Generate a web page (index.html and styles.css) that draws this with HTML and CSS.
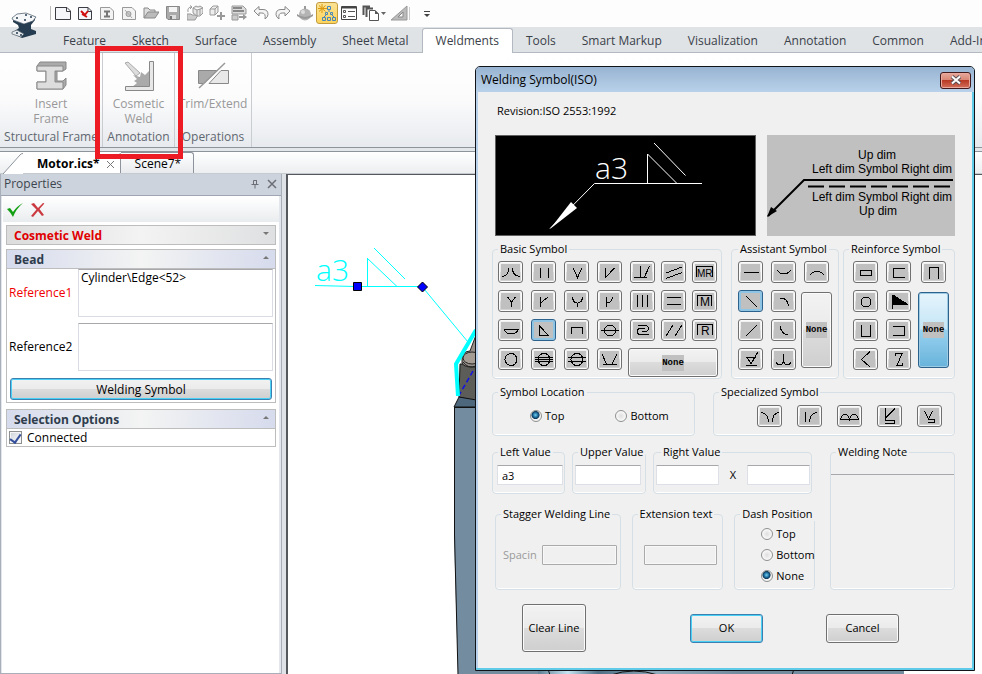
FILE: index.html
```html
<!DOCTYPE html>
<html lang="en">
<head>
<meta charset="utf-8">
<title>Motor.ics - Welding Symbol</title>
<link rel="stylesheet" href="styles.css">
</head>
<body>
<header class="ribbon">
  <div class="quick">
    <svg class="logo" viewBox="0 0 26 27" aria-hidden="true"><path d="M2 8L13 12L24 6V8L20 13V17L25 19V22L11 26L1 21L8 16L7 13L2 10Z" fill="#263c50"/><path d="M1 6L6 2L15 1L25 5L22 9L13 12L2 8Z" fill="#f5f7f8" stroke="#3f5060" stroke-width=".7"/><path d="M1 20L6 18L13 22L10 25L1 22Z" fill="#e7eaec" stroke="#53616d" stroke-width=".7"/><path d="M5 6h2M14 3h2M19 5h2M13 8h2M5 21h2M9 23h2" stroke="#263c50" stroke-width="1.4"/></svg>
    <div class="quick-bar">
      <button aria-label="New"><svg viewBox="0 0 16 16"><path d="M.5 2.500H12L15.500 6V14.500H.5Z" fill="#f4f6fa" stroke="#3c3c44"/><path d="M11.500 2.500V6.500H15.500" fill="none" stroke="#3c3c44"/></svg></button>
      <button aria-label="New scene"><svg viewBox="0 0 16 16"><path d="M1.500 2.500H11L14.500 6V14.500H1.500Z" fill="#f4f6fa" stroke="#3c3c44"/><path d="M11 2.500V6.500H14" fill="none" stroke="#3c3c44"/><path d="M4 6L8 10M11 6L7 11M5 9L10 12" stroke="#d01010" stroke-width="2"/></svg></button>
      <button aria-label="New part"><svg viewBox="0 0 16 16"><path d="M1.500 2.500H11L14.500 6V14.500H1.500Z" fill="#f3f3f3" stroke="#999"/><path d="M5 6.500H11M5 11.500H11M8 6V12" stroke="#777" stroke-width="2"/></svg></button>
      <button aria-label="New drawing"><svg viewBox="0 0 16 16"><path d="M1.500 2.500H11L14.500 6V14.500H1.500Z" fill="#f3f3f3" stroke="#999"/><circle cx="7.500" cy="9" r="2.500" fill="#ccc" stroke="#999"/><path d="M4 5L11 13" stroke="#aaa"/></svg></button>
      <button aria-label="Open"><svg viewBox="0 0 16 16"><path d="M1 13V3H5L7 5H12V7" fill="#ddd" stroke="#888"/><path d="M1 13L5 7H16L12 13Z" fill="#bbb" stroke="#888"/></svg></button>
      <button aria-label="Save"><svg viewBox="0 0 16 16"><path d="M1.500 1.500H14.500V14.500H3L1.500 13Z" fill="#aaa" stroke="#888"/><path d="M4 2H12V7H4Z" fill="#f4f4f4"/><path d="M5 10H11V14H5Z" fill="#ddd"/><path d="M6 11V14" stroke="#777" stroke-width="2"/></svg></button>
      <button aria-label="Import"><svg viewBox="0 0 16 16"><path d="M0 15V9H4L5 10H11L8 15Z" fill="#ccc" stroke="#999"/><path d="M6 3L9 1L11 2L13 1L16 3V8L13 11H10L6 8ZM6 3L10 5L16 3M10 5V11M13 4V10" fill="#e5e5e5" stroke="#999"/><path d="M1 7Q0 2 5 2M3 .5L5 2L3 4" fill="none" stroke="#999"/></svg></button>
      <button aria-label="Insert"><svg viewBox="0 0 16 16"><path d="M1 4L4 1H9V7L6 10H1ZM1 4H6V10M6 4L9 1" fill="#eee" stroke="#999"/><path d="M12 7V15M8 11H16" stroke="#999" stroke-width="2"/></svg></button>
      <button aria-label="Export"><svg viewBox="0 0 16 16"><path d="M1 1H12L15 4V9H1Z" fill="#ddd" stroke="#999"/><path d="M2 3H11M2 6H13" stroke="#888" stroke-width="2"/><path d="M1 10H7V15H1Z" fill="#ccc" stroke="#999"/><path d="M8 11H12V9L16 12L12 15V13H8Z" fill="#999"/></svg></button>
      <button aria-label="Undo"><svg viewBox="0 0 16 16"><path d="M1 6L6 1.500V4.500H10Q15 4.500 15 9.500Q15 12 12 14Q13 8 9 8H6V11Z" fill="#f5f5f5" stroke="#888"/></svg></button>
      <button aria-label="Redo"><svg viewBox="0 0 16 16"><path d="M15 6L10 1.500V4.500H6Q1 4.500 1 9.500Q1 12 4 14Q3 8 7 8H10V11Z" fill="#f5f5f5" stroke="#888"/></svg></button>
      <button aria-label="Render"><svg viewBox="0 0 16 16"><circle cx="8" cy="9.500" r="6" fill="#b4b4b4"/><path d="M8 1V4" stroke="#999" stroke-width="2"/><path d="M0 9Q8 15 16 9V11Q8 17 0 11Z" fill="#999"/><circle cx="6" cy="7" r="2" fill="#ddd"/></svg></button>
      <button class="active" aria-label="Scene tree"><svg viewBox="0 0 18 18"><path d="M4 0V9M0 4.500H9M1 1.500L7.500 7.500M7.500 1.500L1 7.500" stroke="#d99a10"/><path d="M9.500 2.500h3v3h-3zM7.500 8.500h2v2h-2zM12.500 8.500h2v2h-2zM4.500 13.500h3v3h-3zM9.500 13.500h3v3h-3zM14.500 13.500h3v3h-3zM11 6V8M6 13L8 11M14 11L16 13" fill="none" stroke="#4587bd"/></svg></button>
      <button aria-label="Property list"><svg viewBox="0 0 16 16"><path d="M.5 1.500H15.500V14.500H.5Z" fill="#fff" stroke="#444"/><path d="M1 2.500H15" stroke="#444" stroke-width="2"/><path d="M2.500 5.500h2v2h-2zM2.500 10.500h2v2h-2zM7 6.500H14M7 11.500H14" fill="none" stroke="#555"/></svg></button>
      <button class="wide" aria-label="Copies"><svg viewBox="0 0 24 16"><path d="M1.500 10V1.500H8M4.500 12V3.500H11" fill="none" stroke="#555" stroke-width="2"/><path d="M7.500 5.500H13L16.500 9V15.500H7.500Z" fill="#fff" stroke="#555"/><path d="M13 5V9H17" fill="#555"/><path d="M19 7H24L21.500 10Z" fill="#666"/></svg></button>
      <button class="wide" aria-label="Measure"><svg viewBox="0 0 24 16"><path d="M1 15L17 1V15Z" fill="#bbb" stroke="#999"/><path d="M8 12L13 7V12Z" fill="#f8f8f8" stroke="#888"/><path d="M19.500 2V15" stroke="#ccc"/></svg></button>
      <button aria-label="Customize"><svg viewBox="0 0 16 16"><path d="M5 6.500H11" stroke="#444"/><path d="M5 9H11L8 12Z" fill="#444"/></svg></button>
    </div>
  </div>
  <nav class="tabs">
    <a href="#">Feature</a><a href="#">Sketch</a><a href="#">Surface</a><a href="#">Assembly</a><a href="#">Sheet Metal</a><a href="#" class="current">Weldments</a><a href="#">Tools</a><a href="#">Smart Markup</a><a href="#">Visualization</a><a href="#">Annotation</a><a href="#">Common</a><a href="#">Add-Ins</a>
  </nav>
  <div class="groups">
    <section class="group frame">
      <button class="tool"><svg viewBox="0 0 32 32"><path d="M2 6L5 2H31V9L28 11H22V21H28L31 18V25L28 29H2V22H11V11H2Z" fill="#aaa" stroke="#888"/><path d="M2 6H28V11H20V22H28V29H2V22H11V11H2Z" fill="#ddd" stroke="#888"/></svg><span>Insert</span><span>Frame</span></button>
      <h2>Structural Frame</h2>
    </section>
    <section class="group weld">
      <button class="tool"><svg viewBox="0 0 32 32"><path d="M2 3L5 2L17 13L13 16Z" fill="#ddd" stroke="#aaa"/><path d="M26 11L22 15L18 12L17 17L10 15L14 19L11 21L14 23L9 27H26Z" fill="#aaa"/><path d="M2.500 26.500H26.500V1.500H30.500V30.500H2.500Z" fill="#e8e8e8" stroke="#888"/></svg><span>Cosmetic</span><span>Weld</span></button>
      <h2>Annotation</h2>
      <div class="callout"></div>
    </section>
    <section class="group ops">
      <button class="tool"><svg viewBox="0 0 32 32"><path d="M1.500 10.500H20L7 23.500H1.500Z" fill="#aaa" stroke="#888"/><path d="M24 10.500H31.500V23.500H12Z" fill="#e8e8e8" stroke="#888"/><path d="M2 28L28 3" stroke="#999" stroke-width="1.500"/></svg><span>Trim/Extend</span></button>
      <h2>Operations</h2>
    </section>
  </div>
</header>
<div class="documents">
  <a href="#" class="doc open"><svg viewBox="0 0 20 21" aria-hidden="true"><path d="M0 21L17 2Q18 .5 20 .5V21Z" fill="#fff"/><path d="M0 21L17 2Q18 .5 20 .5" fill="none" stroke="#8d939b"/></svg><b>Motor.ics*</b><svg class="x" viewBox="0 0 9 9" aria-hidden="true"><path d="M1 1L8 8M8 1L1 8" stroke="#777"/></svg></a>
  <a href="#" class="doc">Scene7*</a>
</div>
<main class="work">
  <aside class="panel">
    <div class="panel-title"><span>Properties</span><button aria-label="Pin"><svg viewBox="0 0 10 10"><path d="M3.500 5V1.500H6.500V5M1.500 5.500H8.500M5 6V9.500M6.500 1V5" fill="none" stroke="#6b6f75"/></svg></button><button aria-label="Close panel"><svg viewBox="0 0 10 10"><path d="M1 1L9 9M9 1L1 9" stroke="#6b6f75" stroke-width="1.500"/></svg></button></div>
    <div class="panel-body">
      <div class="confirm"><button aria-label="Accept"><svg viewBox="0 0 16 16"><path d="M0 7L3 6L6 10Q10 4 16 1Q9 7 6 15Q4 11 0 7Z" fill="#12a012"/></svg></button><button aria-label="Reject"><svg viewBox="0 0 16 16"><path d="M1 2L4 1L8 6L13 1Q15 1 14 2L9.500 7L14 13L12 14L8 9L3 15L1 14L6.500 7.500Z" fill="#cb3a40"/></svg></button></div>
      <button class="bar feature"><b>Cosmetic Weld</b><i class="down"></i></button>
      <section class="box">
        <button class="bar"><b>Bead</b><i class="up"></i></button>
        <div class="refs">
          <label for="ref1" class="missing">Reference1</label><textarea id="ref1">Cylinder\Edge&lt;52&gt;</textarea>
          <label for="ref2">Reference2</label><textarea id="ref2"></textarea>
        </div>
        <button class="push focus full">Welding Symbol</button>
      </section>
      <section class="box">
        <button class="bar"><b>Selection Options</b><i class="up"></i></button>
        <label class="check"><input type="checkbox" checked>Connected</label>
      </section>
    </div>
  </aside>
  <div class="canvas">
    <svg class="scene" viewBox="0 0 694 500" role="img" aria-label="Model view">
      <defs><linearGradient id="shine"><stop offset="0" stop-color="#5f7f95"/><stop offset=".15" stop-color="#c4e4f2"/><stop offset=".3" stop-color="#4f6f85"/><stop offset=".6" stop-color="#8fa9ba"/><stop offset="1" stop-color="#738c9f"/></linearGradient></defs>
      <path d="M171 222L188 226V189L172 189Z" fill="#5c5d58" stroke="#111"/>
      <path d="M174 188Q173 176 182 176L188 160V192Q176 193 174 188Z" fill="#97908a" stroke="#222"/>
      <ellipse cx="184" cy="183" rx="9" ry="6" fill="#a59c93" stroke="#222"/>
      <path d="M175 187Q180 194 188 191" fill="none" stroke="#222"/>
      <path d="M171 222L200 227V232H166Z" fill="#4d687d" stroke="#111"/>
      <path d="M166 232H616V500H170L166 360Z" fill="#738c9f"/>
      <path d="M250 494H450V500H250Z" fill="url(#shine)"/>
      <path d="M260 494L262 500M323 500Q345 492 370 500M506 494L504 500" fill="none" stroke="#111"/>
      <path d="M166.500 232V360L170 500M166 232.500H190" fill="none" stroke="#111"/>
      <path d="M185 196L170 222" stroke="#1010e8" stroke-width="1.500" stroke-dasharray="5 3"/>
      <path d="M188 155L168 189L170 221" fill="none" stroke="#0ff" stroke-width="4"/>
      <g fill="none" stroke="#0ff"><path d="M27 110.500L67 111.500H134L180 167M79.500 83V111M79 83L109 111.500M86 73L117 104"/></g>
      <text x="28" y="106" class="cad cyan">a3</text>
      <path d="M65.500 107.500H73.500V115.500H65.500Z" fill="#00f" stroke="#000"/>
      <path d="M134.500 107L139.500 112L134.500 117L129.500 112Z" fill="#00f" stroke="#000"/>
    </svg>
  </div>
</main>

<form class="dialog" role="dialog" aria-labelledby="dlg-title">
  <div class="dialog-title"><h1 id="dlg-title">Welding Symbol(ISO)</h1><button type="button" class="close" aria-label="Close"><svg viewBox="0 0 12 10"><path d="M2 1.500L10 8.500M10 1.500L2 8.500" stroke="#5c5055" stroke-width="4"/><path d="M2 1.500L10 8.500M10 1.500L2 8.500" stroke="#fff" stroke-width="2"/></svg></button></div>
  <div class="dialog-body">
    <p class="revision">Revision:ISO 2553:1992</p>
    <div class="previews">
      <svg class="preview" viewBox="0 0 261 101" role="img" aria-label="Symbol preview"><path d="M207 48.500H99.500L55 93.500M152.500 48V19L181.500 48M159 8L190.500 40.500" fill="none" stroke="#fff"/><path d="M55 94L76 67L82 73Z" fill="#fff"/><text x="100" y="44" class="cad white">a3</text></svg>
      <svg class="guide" viewBox="0 0 188 101" role="img" aria-label="Dimension positions"><path d="M186 45H37L1 81" fill="none" stroke="#000" stroke-width="2"/><path d="M0 82L4 72L10 76Z"/><path d="M41 51.500H183" stroke="#000" stroke-width="2" stroke-dasharray="16 5"/><g font-family="Liberation Sans, sans-serif" font-size="12"><text x="91" y="24">Up dim</text><text x="45" y="38">Left dim Symbol Right dim</text><text x="45" y="66">Left dim Symbol Right dim</text><text x="92" y="80">Up dim</text></g></svg>
    </div>
    <div class="row symbols">
      <fieldset class="basic"><legend>Basic Symbol</legend>
        <div class="pad">
          <button type="button" aria-label="Flanged edge"><svg viewBox="3 3 19 16"><path d="M4 15.500Q10.500 15 10.500 7M14.500 7Q14.500 15 22 15.500"/></svg></button>
          <button type="button" aria-label="Square"><svg viewBox="3 3 19 16"><path d="M9.500 7V17M17.500 7V17"/></svg></button>
          <button type="button" aria-label="V"><svg viewBox="3 3 19 16"><path d="M9 7L13.500 16.500L18 7"/></svg></button>
          <button type="button" aria-label="Bevel"><svg viewBox="3 3 19 16"><path d="M8.500 7V16.500L17.500 7"/></svg></button>
          <button type="button" aria-label="Steep bevel"><svg viewBox="3 3 19 16"><path d="M10.500 5V16.500M4 16.500H17M19.500 5L14 17"/></svg></button>
          <button type="button" aria-label="Inclined"><svg viewBox="3 3 19 16"><path d="M5 12L21 6M5 17.500L21 11.500"/></svg></button>
          <button type="button" aria-label="MR"><svg viewBox="3 3 19 16"><path d="M4.500 16V5.500H20.500V16"/><text x="5" y="16">MR</text></svg></button>
          <button type="button" aria-label="Y"><svg viewBox="3 3 19 16"><path d="M9.500 7L13.500 12L17.500 7M13.500 12V17"/></svg></button>
          <button type="button" aria-label="Half Y"><svg viewBox="3 3 19 16"><path d="M9.500 7V17M9.500 13L17 7"/></svg></button>
          <button type="button" aria-label="U"><svg viewBox="3 3 19 16"><path d="M8.500 7Q9 13 13.500 13Q18 13 18.500 7M13.500 13V17"/></svg></button>
          <button type="button" aria-label="J"><svg viewBox="3 3 19 16"><path d="M9.500 7V17M9.500 13Q15 13 15.500 7"/></svg></button>
          <button type="button" aria-label="Three bars"><svg viewBox="3 3 19 16"><path d="M7.500 5V17M12.500 5V17M17.500 5V17"/></svg></button>
          <button type="button" aria-label="Surface joint"><svg viewBox="3 3 19 16"><path d="M6 7.500H20M6 14.500H20"/></svg></button>
          <button type="button" aria-label="M"><svg viewBox="3 3 19 16"><path d="M5.500 16V5.500H19.500V16"/><text x="8" y="16" class="one">M</text></svg></button>
          <button type="button" aria-label="Backing run"><svg viewBox="3 3 19 16"><path d="M6 10.500H20.500Q18 14.500 15.500 14.500H11Q8 14.500 6 10.500"/></svg></button>
          <button type="button" class="on" aria-label="Fillet"><svg viewBox="3 3 19 16"><path d="M8.500 7V16.500H17.500Z"/></svg></button>
          <button type="button" aria-label="Plug"><svg viewBox="3 3 19 16"><path d="M7.500 15V8.500H18.500V15"/></svg></button>
          <button type="button" aria-label="Spot seam"><svg viewBox="3 3 19 16"><circle cx="13" cy="11.500" r="5.500"/><path d="M4 11.500H22"/></svg></button>
          <button type="button" aria-label="Fold"><svg viewBox="3 3 19 16"><path d="M7.500 6.500H15Q18.500 6.500 18.500 9.500Q18.500 12.500 15 12.500H12M15 9.500H10Q7.500 9.500 7.500 12.500Q7.500 15.500 10 15.500H18.500"/></svg></button>
          <button type="button" aria-label="Inclined joint"><svg viewBox="3 3 19 16"><path d="M5 17L12 6M14 17L21 6"/></svg></button>
          <button type="button" aria-label="R"><svg viewBox="3 3 19 16"><path d="M5.500 16V5.500H20.500V16"/><text x="9" y="16" class="one">R</text></svg></button>
          <button type="button" aria-label="Spot"><svg viewBox="3 3 19 16"><circle cx="13" cy="11.500" r="6"/></svg></button>
          <button type="button" aria-label="Seam three"><svg viewBox="3 3 19 16"><circle cx="13" cy="11.500" r="6"/><path d="M4 9.500H22M4 11.500H22M4 13.500H22"/></svg></button>
          <button type="button" aria-label="Seam two"><svg viewBox="3 3 19 16"><circle cx="13" cy="11.500" r="6"/><path d="M4 9.500H22M4 13.500H22"/></svg></button>
          <button type="button" aria-label="Steep V"><svg viewBox="3 3 19 16"><path d="M5 6L9.500 16L6 16.500H20L15 16L20 6"/></svg></button>
          <button type="button" class="none across"><span>None</span></button>
        </div>
      </fieldset>
      <fieldset class="assistant"><legend>Assistant Symbol</legend>
        <div class="pad">
          <button type="button" aria-label="Flat"><svg viewBox="3 3 19 16"><path d="M6 11.500H21"/></svg></button>
          <button type="button" aria-label="Concave"><svg viewBox="3 3 19 16"><path d="M6 9.500Q13 16.500 20 9.500"/></svg></button>
          <button type="button" aria-label="Convex"><svg viewBox="3 3 19 16"><path d="M6 13.500Q13 7 20 13.500"/></svg></button>
          <button type="button" class="on" aria-label="Flat slant"><svg viewBox="3 3 19 16"><path d="M8 6L19 17"/></svg></button>
          <button type="button" aria-label="Convex slant"><svg viewBox="3 3 19 16"><path d="M9 8Q17 8 17.500 16"/></svg></button>
          <button type="button" class="none down"><span>None</span></button>
          <button type="button" aria-label="Rising slant"><svg viewBox="3 3 19 16"><path d="M8 17L19 6"/></svg></button>
          <button type="button" aria-label="Concave slant"><svg viewBox="3 3 19 16"><path d="M9.500 7Q9.500 14.500 17 16"/></svg></button>
          <button type="button" aria-label="Finish"><svg viewBox="3 3 19 16"><path d="M8 9.500H17L13 15.500L9 9.500M13 15.500L20 4M8 17.500H19"/></svg></button>
          <button type="button" aria-label="Blended toes"><svg viewBox="3 3 19 16"><path d="M12.500 6V14Q9 19.500 5 14.500M12.500 14Q16 19.500 20 14.500"/></svg></button>
        </div>
      </fieldset>
      <fieldset class="reinforce"><legend>Reinforce Symbol</legend>
        <div class="pad">
          <button type="button" aria-label="Rectangle"><svg viewBox="3 3 19 16"><path d="M7.500 9.500H18.500V14.500H7.500Z"/></svg></button>
          <button type="button" aria-label="Open right"><svg viewBox="3 3 19 16"><path d="M19 7.500H7.500V16.500H19"/></svg></button>
          <button type="button" aria-label="Open bottom"><svg viewBox="3 3 19 16"><path d="M8.500 17.500V6.500H17.500V17.500"/></svg></button>
          <button type="button" aria-label="All round"><svg viewBox="3 3 19 16"><circle cx="13" cy="12" r="5"/></svg></button>
          <button type="button" aria-label="Field weld"><svg viewBox="3 3 19 16"><path d="M6.500 5V19"/><path d="M7 5L21 14H7Z" fill="#000"/></svg></button>
          <button type="button" class="none down chosen"><span>None</span></button>
          <button type="button" aria-label="Open top"><svg viewBox="3 3 19 16"><path d="M8.500 6V17.500H17.500V6"/></svg></button>
          <button type="button" aria-label="Open left"><svg viewBox="3 3 19 16"><path d="M7 7.500H18.500V16.500H7"/></svg></button>
          <button type="button" aria-label="Tail"><svg viewBox="3 3 19 16"><path d="M17 3.500L8.500 11.500L17 19"/></svg></button>
          <button type="button" aria-label="Staggered"><svg viewBox="3 3 19 16"><path d="M9.500 8V5.500H16L11 17.500H16V15"/></svg></button>
        </div>
      </fieldset>
    </div>
    <div class="row second">
      <fieldset class="location"><legend>Symbol Location</legend>
        <div class="options"><label><input type="radio" name="loc" checked>Top</label><label><input type="radio" name="loc">Bottom</label></div>
      </fieldset>
      <fieldset class="special"><legend>Specialized Symbol</legend>
        <div class="pad">
          <button type="button" aria-label="Flare V"><svg viewBox="3 3 19 16"><path d="M4 7.500Q11 8 11.500 17M22 7.500Q15.500 8 15.500 17"/></svg></button>
          <button type="button" aria-label="Flare bevel"><svg viewBox="3 3 19 16"><path d="M8.500 7V17M20 7.500Q13 8 12.500 17"/></svg></button>
          <button type="button" aria-label="Surfacing"><svg viewBox="3 3 19 16"><path d="M3 14.500H22M3.500 14Q5 9.500 8 9.500Q11 9.500 12.500 14Q14 9.500 17 9.500Q20 9.500 21.500 14"/></svg></button>
          <button type="button" aria-label="Bevel with backing"><svg viewBox="3 3 19 16"><path d="M8.500 3V15.500H17.500V18.500H8M18 3.500L9 12.500"/></svg></button>
          <button type="button" aria-label="V with backing"><svg viewBox="3 3 19 16"><path d="M7.500 6L11.500 14L15.500 6M11.500 14.500H17.500V17.500H11"/></svg></button>
        </div>
      </fieldset>
    </div>
    <div class="row lower">
      <div class="values">
        <div class="row">
          <fieldset class="v1"><legend>Left Value</legend><input type="text" value="a3" aria-label="Left Value"></fieldset>
          <fieldset class="v2"><legend>Upper Value</legend><input type="text" aria-label="Upper Value"></fieldset>
          <fieldset class="v3"><legend>Right Value</legend><div class="pair"><input type="text" aria-label="Right Value"><span>X</span><input type="text" aria-label="Right Value length"></div></fieldset>
        </div>
        <div class="row third">
          <fieldset class="stagger"><legend>Stagger Welding Line</legend><div class="off"><label for="spacing">Spacing</label><input id="spacing" type="text" disabled></div></fieldset>
          <fieldset class="ext"><legend>Extension text</legend><div class="off"><input type="text" disabled aria-label="Extension text"></div></fieldset>
          <fieldset class="dash"><legend>Dash Position</legend><div class="options column"><label><input type="radio" name="dash">Top</label><label><input type="radio" name="dash">Bottom</label><label><input type="radio" name="dash" checked>None</label></div></fieldset>
        </div>
      </div>
      <fieldset class="note"><legend>Welding Note</legend><textarea aria-label="Welding Note"></textarea></fieldset>
    </div>
    <div class="actions">
      <button type="button" class="push tall">Clear Line</button>
      <button type="button" class="push focus">OK</button>
      <button type="button" class="push">Cancel</button>
    </div>
  </div>
</form>
</body>
</html>
```
FILE: styles.css
```css
* { box-sizing: border-box; }
body {
  margin: 0;
  height: 100vh;
  overflow: hidden;
  display: flex;
  flex-direction: column;
  position: relative;
  background: #dfe3e8;
  color: #000;
  font: 12px/15px "Open Sans", "Noto Sans", sans-serif;
}
button, input, textarea { font: inherit; color: inherit; margin: 0; }
button { padding: 0; border: 0; background: none; }
a { color: inherit; text-decoration: none; }
h1, h2, p { margin: 0; font: inherit; }
svg { display: block; }

/* Ribbon */
.quick { display: flex; height: 27px; background: #fdfdfd; }
.logo { width: 26px; height: 27px; margin: 12px 12px 0 11px; position: relative; z-index: 1; }
.quick-bar { display: flex; align-items: center; height: 26px; padding-left: 1px; }
.quick-bar::before { content: ""; width: 1px; height: 14px; margin-right: 1px; background: #bbb; }
.quick-bar button { width: 22px; height: 22px; display: grid; place-items: center; }
.quick-bar svg { width: 16px; height: 16px; }
.quick-bar .wide { width: 28px; }
.quick-bar .wide svg { width: 24px; }
.quick-bar .active { border: 1px solid #c29b3f; border-radius: 3px; background: linear-gradient(#fbe294, #fdd45c); }
.quick-bar .active svg { width: 18px; height: 18px; }
.tabs { display: flex; height: 26px; padding-left: 50px; background: #dfe3e6; border-bottom: 1px solid #b3b9c1; white-space: nowrap; color: #3a4149; }
.tabs a { padding: 6px 13px 0; height: 26px; }
.tabs .current { margin-top: 1px; padding-top: 4px; height: 25px; border: 1px solid #b3b9c1; border-bottom: 0; border-radius: 3px 3px 0 0; background: #fff; }
.groups { display: flex; height: 95px; background: linear-gradient(#fff 0, #fbfbfc 50%, #e7eaee); border-bottom: 1px solid #8e949c; }
.group { display: flex; flex-direction: column; align-items: center; justify-content: space-between; padding: 7px 0 3px; position: relative; border-right: 1px solid #c9cdd2; white-space: nowrap; color: #5f6770; }
.frame { width: 103px; }
.weld { width: 72px; }
.ops { width: 77px; }
.tool { display: flex; flex-direction: column; align-items: center; color: #989898; }
.tool svg { width: 32px; height: 32px; margin-bottom: 4px; }
.callout { position: absolute; inset: -7px -9px -12px -8px; border: 5px solid #ed1c24; z-index: 2; }

/* Document tabs */
.documents { display: flex; height: 26px; padding: 4px 0 0 3px; background: linear-gradient(#e4e7ea 3px, #8e949c 3px, #8e949c 4px, #fff 4px, #eceef0); border-bottom: 1px solid #c5cad0; }
.doc { display: flex; padding: 3px 12px 0 14px; border: 1px solid #8e949c; border-width: 1px 1px 0 0; border-radius: 0 3px 0 0; background: linear-gradient(#fff, #e8eaed); }
.open { padding: 0 5px 0 0; border-top-color: transparent; background: linear-gradient(90deg, transparent 20px, #fff 20px); }
.open > svg:first-child { width: 20px; height: 21px; }
.open b { padding: 3px 6px 0 14px; }
.open .x { width: 9px; height: 9px; margin-top: 7px; }

/* Properties panel */
.work { display: flex; flex: 1; min-height: 0; }
.panel { width: 282px; display: flex; flex-direction: column; border: 1px solid #a9afb9; border-top: 0; margin-right: 4px; background: #fff; flex: none; }
.panel-title { display: flex; align-items: center; gap: 7px; height: 22px; padding: 0 4px 2px 3px; background: #ccd3dc; border-bottom: 1px solid #a0a6b1; color: #3d454e; }
.panel-title span { flex: 1; }
.panel-title svg { width: 10px; height: 10px; }
.panel-body { flex: 1; padding: 1px 3px 1px 4px; border-left: 1px solid #e3e7ed; border-right: 2px solid #e3e7ed; }
.confirm { display: flex; gap: 7px; height: 25px; padding: 5px 4px; margin: 0 -3px 3px; background: linear-gradient(#fff, #e9ecee); }
.confirm svg { width: 16px; height: 16px; }
.bar { width: 100%; height: 19px; display: flex; align-items: center; justify-content: space-between; padding: 1px 6px 0 7px; color: #2e3c4c; background: linear-gradient(90deg, #d6dbed, #f3f4f3 50%, #d6dbed); border-bottom: 1px solid #bdbdbd; }
.feature { margin-bottom: 4px; height: 20px; color: #e00000; border: 1px solid #bdbdbd; background: linear-gradient(90deg, #dcdcdd, #f3f3f3 50%, #dfe0e1); }
.bar i { width: 0; height: 0; border: 3px solid transparent; margin-top: -4px; }
.bar .down { border-top-color: #777; border-bottom: 0; }
.bar .up { border-bottom-color: #777; border-top: 0; }
.box { border: 1px solid #bdbdbd; margin-bottom: 6px; }
.refs { display: grid; grid-template-columns: 71px 1fr; gap: 6px 0; align-items: center; padding: 0 2px 7px 0; line-height: 14px; }
.refs label { padding-left: 2px; }
.missing { color: #f00000; }
.refs textarea { height: 48px; padding: 1px 2px; resize: none; border: 1px solid #d9dce3; border-top-color: #a8a8ac; outline: 0; }
.check { display: flex; align-items: center; gap: 5px; height: 17px; padding-left: 2px; }
.check input { appearance: none; width: 13px; height: 13px; border: 1px solid #8e8f8f; background: linear-gradient(135deg, #cdd2da, #fff); display: grid; place-items: center; box-shadow: inset 0 0 0 1px #f4f4f4; }
.check input:checked::after { content: ""; width: 5px; height: 9px; border: solid #35509b; border-width: 0 2px 2px 0; transform: rotate(35deg); }

.push { width: 73px; height: 29px; border: 1px solid #707070; border-radius: 3px; box-shadow: inset 0 0 0 1px #fbfbfb; background: linear-gradient(#f2f2f2, #ebebeb 49%, #dcdcdc 50%, #cfcfcf); }
.focus { border-color: #3c7fb1; box-shadow: inset 0 0 0 1px #48d0f5; }
.full { display: block; width: calc(100% - 6px); height: 22px; margin: 0 3px 2px; }
.tall { width: 64px; height: 48px; }

/* Model view */
.canvas { flex: 1; min-width: 0; overflow: hidden; background: #fff; border: solid #55585d; border-width: 1px 0 0 2px; }
.scene { width: 694px; height: 500px; }
.cad { font-family: "Liberation Sans Narrow", "Open Sans", sans-serif; font-weight: 300; font-size: 30px; }
.cyan { fill: #0ff; }
.white { fill: #fff; }

/* Dialog */
.dialog { position: absolute; top: 66px; right: 7px; width: 500px; border: 1px solid #101418; border-radius: 5px 5px 0 0; background: #f0f0f0; box-shadow: inset -1px -1px 0 1px #5fcbe8, inset 1px 0 0 1px #b9d1ea; z-index: 5; font-size: 11px; line-height: 14px; }
.dialog-title { display: flex; justify-content: space-between; align-items: center; height: 25px; padding: 1px 3px 0 5px; border-radius: 4px 4px 0 0; background: linear-gradient(#98b4d2, #b9d1ea); font-size: 12px; }
.close { width: 31px; height: 17px; border: 1px solid #431a1c; border-radius: 3px; box-shadow: inset 0 0 0 1px #e9a99c; background: linear-gradient(#e6a99c, #d98573 49%, #b93a25 50%, #d2705c); display: grid; place-items: center; }
.close svg { width: 12px; height: 10px; }
.dialog-body { padding: 12px 19px 18px 16px; }
.revision { padding-left: 5px; margin-bottom: 17px; }
.previews { display: grid; grid-template-columns: 261px 1fr; gap: 11px; padding-left: 3px; }
.preview { width: 100%; background: #000; outline: 1px solid #606060; outline-offset: -1px; }
.guide { width: 100%; background: #c0c0c0; }
.row { display: flex; }
fieldset { min-width: 0; margin: 0; padding: 5px 0 1px; border: 1px solid #d5dfe5; border-radius: 4px; box-shadow: inset 0 -1px 0 #fff; }
legend { margin-left: 5px; padding: 0 2px; height: 14px; white-space: nowrap; }
.symbols { margin-top: 6px; }
.basic { width: 230px; margin-right: 9px; padding-left: 5px; }
.assistant { width: 108px; margin-right: 4px; padding-left: 6px; }
.reinforce { flex: 1; padding-left: 9px; }
.symbols legend { margin-left: 0; }
.reinforce legend { margin-left: -4px; }
.pad { display: grid; grid-template-rows: 22px 22px 22px 29px; row-gap: 7px; align-items: start; }
.basic .pad { grid-template-columns: repeat(4, 33px) 31px 31px 27px; }
.assistant .pad { grid-template-columns: 33px 33px 25px; }
.reinforce .pad { grid-template-columns: 33px 35px 27px; }
.pad button { width: 25px; height: 22px; display: grid; place-items: center; border: 1px solid #707070; border-radius: 3px; box-shadow: inset 0 0 0 1px #fbfbfb; background: linear-gradient(#f2f2f2, #ebebeb 49%, #dcdcdc 50%, #cfcfcf); }
.pad svg { width: 19px; height: 16px; background: #c0c0c0; fill: none; stroke: #000; shape-rendering: crispEdges; }
.pad text { font: 10px "Liberation Sans", sans-serif; fill: #000; stroke: none; }
.pad .one { font-size: 12px; }
.pad .on { border-color: #2c628b; box-shadow: inset 0 0 0 2px #8ec5e4; }
.pad .none { font: bold 9px/16px "Liberation Mono", monospace; }
.pad .none span { background: #c0c0c0; }
.pad .across { grid-column: 5 / 8; width: 90px; height: 29px; margin-left: -2px; }
.pad .down { grid-area: 2 / 3 / 5 / 4; width: 31px; height: 76px; margin: 2px 0 0 -3px; }
.pad .chosen { border-color: #2c628b; background: linear-gradient(#e5f4fc, #c4e5f6 49%, #98d1ef 50%, #68b3db); box-shadow: inset 0 0 0 1px #9ecbe4; }
.second { gap: 18px; margin-top: 6px; }
.location { width: 203px; height: 51px; }
.special { flex: 1; }
.special .pad { display: flex; gap: 15px; padding: 1px 0 0 43px; }
.options { display: flex; gap: 51px; padding: 5px 0 0 37px; }
.options label { display: flex; align-items: center; gap: 3px; }
.options input { appearance: none; flex: none; width: 12px; height: 12px; border: 1px solid #8e8f8f; border-radius: 50%; background: radial-gradient(#dedede, #fafafa 70%); }
.options input:checked { background: radial-gradient(circle at 45% 40%, #6fd0f2, #0b4f80 38%, #173a52 45%, #f4f4f4 55%); }
.lower { gap: 15px; margin-top: 9px; }
.values { width: 323px; }
.values > .row { gap: 7px; }
.values input[type="text"] { width: 66px; height: 20px; padding: 0 4px; border: 1px solid #dde1e7; border-top-color: #a8a8ac; border-radius: 1px; background: #fff; outline: 0; }
.v1, .v2, .v3 { height: 49px; padding: 6px 2px 0 4px; }
.v1 { width: 73px; }
.v2 { width: 74px; padding-left: 2px; }
.v3 { width: 159px; padding: 6px 1px 0 2px; }
.values .v1 legend { margin-left: 1px; }
.values .v2 legend { margin-left: 3px; }
.pair { display: flex; align-items: center; justify-content: space-between; }
.values .pair input[type="text"] { width: 63px; }
.values > .third { gap: 11px; margin: 13px 0 0 3px; }
.third fieldset { height: 83px; }
.stagger { width: 126px; }
.ext { width: 92px; }
.dash { width: 81px; }
.off { display: flex; align-items: center; gap: 5px; padding: 19px 3px 0 7px; }
.off label { width: 34px; overflow: hidden; color: #9a9a9a; }
.values .off input[type="text"] { flex: 1; min-width: 0; border-color: #aaa; background: #f0f0f0; box-shadow: inset 0 0 0 1px #f8f8f8; }
.ext .off { padding: 19px 5px 0 11px; }
.column { flex-direction: column; gap: 7px; padding: 1px 0 0 26px; }
.note { flex: 1; padding: 15px 0 0; }
.note textarea { display: block; width: 100%; height: 100px; resize: none; border: 0; border-top: 1px solid #a8a8ac; background: none; outline: 0; }
.actions { display: flex; align-items: center; padding-left: 30px; margin-top: 14px; }
.actions .push:nth-child(2) { margin: 0 63px 0 104px; }
```
